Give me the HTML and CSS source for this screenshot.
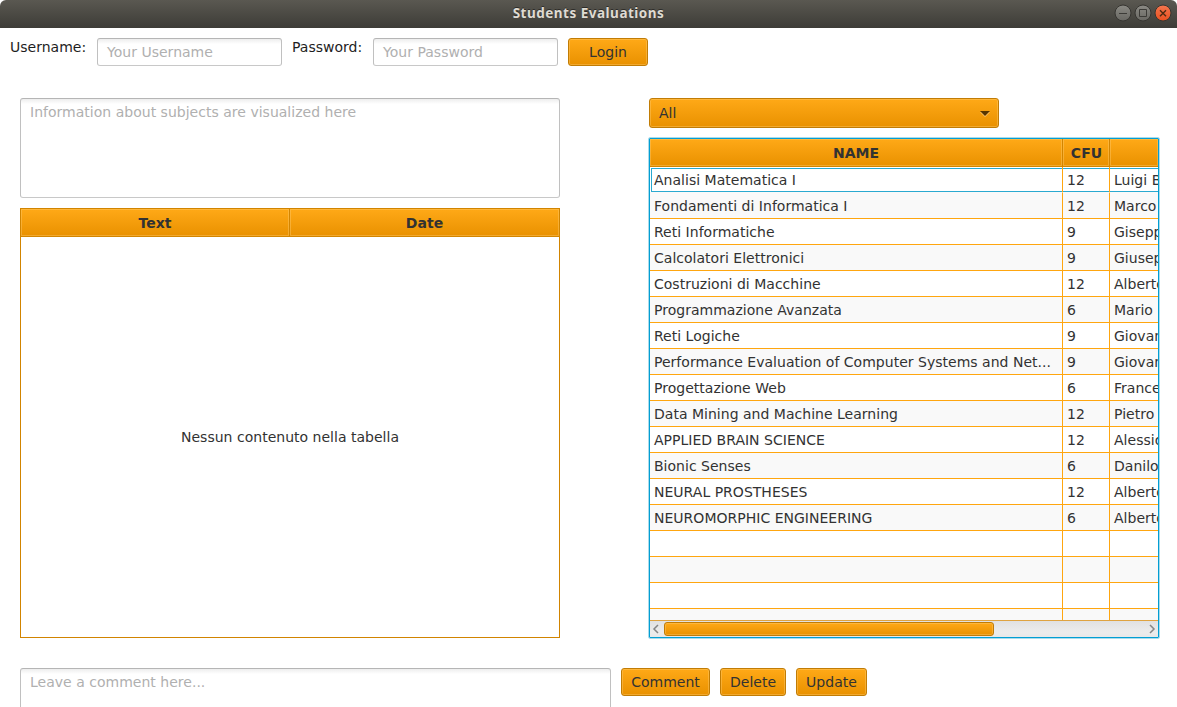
FILE: index.html
```html
<!DOCTYPE html>
<html lang="it">
<head>
<meta charset="utf-8">
<title>Students Evaluations</title>
<link rel="stylesheet" href="styles.css">
</head>
<body>
<div class="window">
  <header class="titlebar">
    <h1 class="title">Students Evaluations</h1>
    <div class="controls">
      <svg width="60" height="20" viewBox="0 0 60 20">
        <defs>
          <linearGradient id="gray" x1="0" y1="0" x2="0" y2="1"><stop offset="0" stop-color="#8b8a84"/><stop offset="1" stop-color="#686762"/></linearGradient>
          <linearGradient id="red" x1="0" y1="0" x2="0" y2="1"><stop offset="0" stop-color="#f4764f"/><stop offset="1" stop-color="#e8501f"/></linearGradient>
        </defs>
        <circle cx="10" cy="10" r="8" fill="url(#gray)" stroke="#363531"/>
        <path d="M6 10.5h8" stroke="#3c3b37"/>
        <circle cx="30" cy="10" r="8" fill="url(#gray)" stroke="#363531"/>
        <path d="M26.5 6.500h7v7h-7z" fill="none" stroke="#3c3b37"/>
        <circle cx="50" cy="10" r="8" fill="url(#red)" stroke="#363531"/>
        <path d="M47 7.2l6 6M53 7.2l-6 6" stroke="#4b2a12" stroke-width="1.4"/>
      </svg>
    </div>
  </header>

  <div class="login">
    <label class="label user-label">Username:</label>
    <div class="field">Your Username</div>
    <label class="label pass-label">Password:</label>
    <div class="field">Your Password</div>
    <div class="button login-button">Login</div>
  </div>

  <main class="content">
    <section class="left">
      <div class="field info">Information about subjects are visualized here</div>
      <div class="comments">
        <div class="comments-head"><div class="th">Text</div><div class="th">Date</div></div>
        <div class="empty">Nessun contenuto nella tabella</div>
      </div>
    </section>
    <section class="right">
      <div class="button combo"><span>All</span><svg width="10" height="7" viewBox="0 0 10 7"><path d="M0 2h10l-5 5z" fill="#ffc873"/><path d="M0 1h10L5 6z" fill="#583600"/></svg></div>
      <div class="subjects">
        <div class="row head"><div class="th">NAME</div><div class="th cfu">CFU</div><div class="th"></div></div>
        <div class="rows">
          <div class="row focused"><div>Analisi Matematica I</div><div>12</div><div>Luigi B</div></div>
          <div class="row"><div>Fondamenti di Informatica I</div><div>12</div><div>Marco</div></div>
          <div class="row"><div>Reti Informatiche</div><div>9</div><div>Gisepp</div></div>
          <div class="row"><div>Calcolatori Elettronici</div><div>9</div><div>Giusep</div></div>
          <div class="row"><div>Costruzioni di Macchine</div><div>12</div><div>Alberto</div></div>
          <div class="row"><div>Programmazione Avanzata</div><div>6</div><div>Mario</div></div>
          <div class="row"><div>Reti Logiche</div><div>9</div><div>Giovan</div></div>
          <div class="row"><div>Performance Evaluation of Computer Systems and Net...</div><div>9</div><div>Giovan</div></div>
          <div class="row"><div>Progettazione Web</div><div>6</div><div>France</div></div>
          <div class="row"><div>Data Mining and Machine Learning</div><div>12</div><div>Pietro</div></div>
          <div class="row"><div>APPLIED BRAIN SCIENCE</div><div>12</div><div>Alessio</div></div>
          <div class="row"><div>Bionic Senses</div><div>6</div><div>Danilo</div></div>
          <div class="row"><div>NEURAL PROSTHESES</div><div>12</div><div>Alberto</div></div>
          <div class="row"><div>NEUROMORPHIC ENGINEERING</div><div>6</div><div>Alberto</div></div>
          <div class="row"><div></div><div></div><div></div></div>
          <div class="row"><div></div><div></div><div></div></div>
          <div class="row"><div></div><div></div><div></div></div>
          <div class="row"><div></div><div></div><div></div></div>
        </div>
        <div class="scrollbar">
          <svg class="arrow" width="14" height="16" viewBox="0 0 14 16"><path d="M8 4L4 8l4 4" fill="none" stroke="#858585" stroke-width="1.500"/></svg>
          <div class="thumb"></div>
          <svg class="arrow end" width="14" height="16" viewBox="0 0 14 16"><path d="M6 4l4 4-4 4" fill="none" stroke="#858585" stroke-width="1.500"/></svg>
        </div>
      </div>
    </section>
  </main>

  <footer class="actions">
    <div class="field comment">Leave a comment here...</div>
    <div class="button comment-button">Comment</div>
    <div class="button delete-button">Delete</div>
    <div class="button update-button">Update</div>
  </footer>
</div>
</body>
</html>
```
FILE: styles.css
```css
* { box-sizing: border-box; }
body {
  margin: 0;
  background: #fff;
  color: #323232;
  font: 14px/20px "DejaVu Sans", sans-serif;
  letter-spacing: 0.015px;
}
.window { width: 1177px; height: 707px; overflow: hidden; }
.titlebar {
  display: grid;
  grid-template-columns: 1fr auto 1fr;
  height: 28px;
  background: linear-gradient(#5a5851, #3d3c37);
  border-radius: 6px 6px 0 0;
}
.title {
  grid-column: 2;
  margin: 0;
  color: #dfdbd2;
  font: bold 13.5px/26px "Noto Sans", sans-serif;
  letter-spacing: 0.5px;
  text-shadow: 0 -1px #2d2c29;
}
.controls { justify-self: end; padding: 3px 4px 0 0; height: 28px; }
.controls svg { display: block; }

.login { display: flex; padding: 10px 0 0 10px; height: 70px; }
.label { line-height: 18px; color: #1e1e1e; white-space: nowrap; }
.user-label { width: 87px; }
.pass-label { width: 81px; margin-left: 10px; }
.field {
  width: 185px;
  height: 28px;
  padding: 3px 9px;
  border: 1px solid;
  border-color: #b5b5b5 #c0c0c0 #c8c8c8;
  border-radius: 3px;
  background: linear-gradient(#ededed, #fff 5px);
  color: #b0b0b0;
  white-space: nowrap;
}
.button {
  height: 28px;
  border: 1px solid #c17c05;
  border-radius: 3px;
  background: linear-gradient(#ffa917, #e99100);
  box-shadow: inset 0 0 0 1px rgba(255, 205, 115, 0.4);
  line-height: 26px;
  text-align: center;
}
.login-button { width: 80px; margin-left: 10px; }

.content { display: flex; justify-content: space-between; padding: 0 17px 0 20px; height: 570px; }
.left { width: 540px; }
.info { width: 540px; height: 100px; }
.comments { height: 430px; margin-top: 10px; border: 1px solid #d18400; }
.comments-head { display: grid; grid-template-columns: 269px 269px; height: 28px; }
.th {
  border-right: 1px solid #d38500;
  background: linear-gradient(#ffa917, #e99100);
  box-shadow: inset 0 0 0 1px rgba(255, 205, 115, 0.4);
  font-weight: bold;
  line-height: 28px;
  text-align: center;
}
.comments-head .th { height: 28px; border-bottom: 1px solid #d38500; }
.comments-head .th:last-child { border-right: 0; }
.empty { display: grid; place-items: center; height: 400px; }

.right { width: 512px; }
.combo {
  display: flex;
  align-items: center;
  justify-content: space-between;
  width: 350px;
  height: 30px;
  margin-left: 1px;
  padding: 0 8px 0 9px;
}
.subjects {
  width: 512px;
  height: 502px;
  margin-top: 9px;
  border: 1px solid #a9dcec;
  border-radius: 2px;
  box-shadow: inset 0 0 0 1px #039ed3;
  padding: 1px;
}
.row {
  display: grid;
  grid-template-columns: 413px 47px 48px;
  height: 26px;
}
.row > div {
  overflow: hidden;
  padding-left: 4px;
  border-right: 1px solid #ffa60f;
  border-bottom: 1px solid #ffa60f;
  line-height: 26px;
  white-space: nowrap;
}
.row > div:last-child { border-right: 0; }
.row:nth-child(even) { background: #f9f9f9; }
.row.head { height: 28px; }
.row.head > .th { padding: 0; border-right-color: #d38500; border-bottom-color: #d38500; line-height: 28px; }
.row.head > .cfu { padding-left: 1px; }
.rows { height: 453px; overflow: hidden; }
.row.focused > div { border-bottom-color: #f9f9f9; }
.focused {
  background: linear-gradient(#2aa9d0, #2aa9d0) 1px 1px / 100% 1px no-repeat,
    linear-gradient(#2aa9d0, #2aa9d0) 1px 24px / 100% 1px no-repeat,
    linear-gradient(#2aa9d0, #2aa9d0) 1px 1px / 1px 24px no-repeat;
}
.scrollbar {
  display: flex;
  height: 17px;
  border-top: 1px solid #dfa340;
  background: linear-gradient(#e1e1e1, #ececec 70%, #e8e8e8);
}
.arrow { flex: none; }
.end { margin-left: auto; }
.thumb {
  width: 330px;
  height: 14px;
  margin-top: 1px;
  border: 1px solid #c17c05;
  border-radius: 3px;
  background: linear-gradient(#ffa917, #e99100);
  box-shadow: inset 0 0 0 1px rgba(255, 205, 115, 0.4);
}

.actions { display: flex; height: 39px; padding-left: 20px; }
.comment { width: 591px; height: 100px; }
.comment-button { width: 89px; margin-left: 10px; }
.delete-button { width: 66px; margin-left: 10px; }
.update-button { width: 71px; margin-left: 10px; }
```
